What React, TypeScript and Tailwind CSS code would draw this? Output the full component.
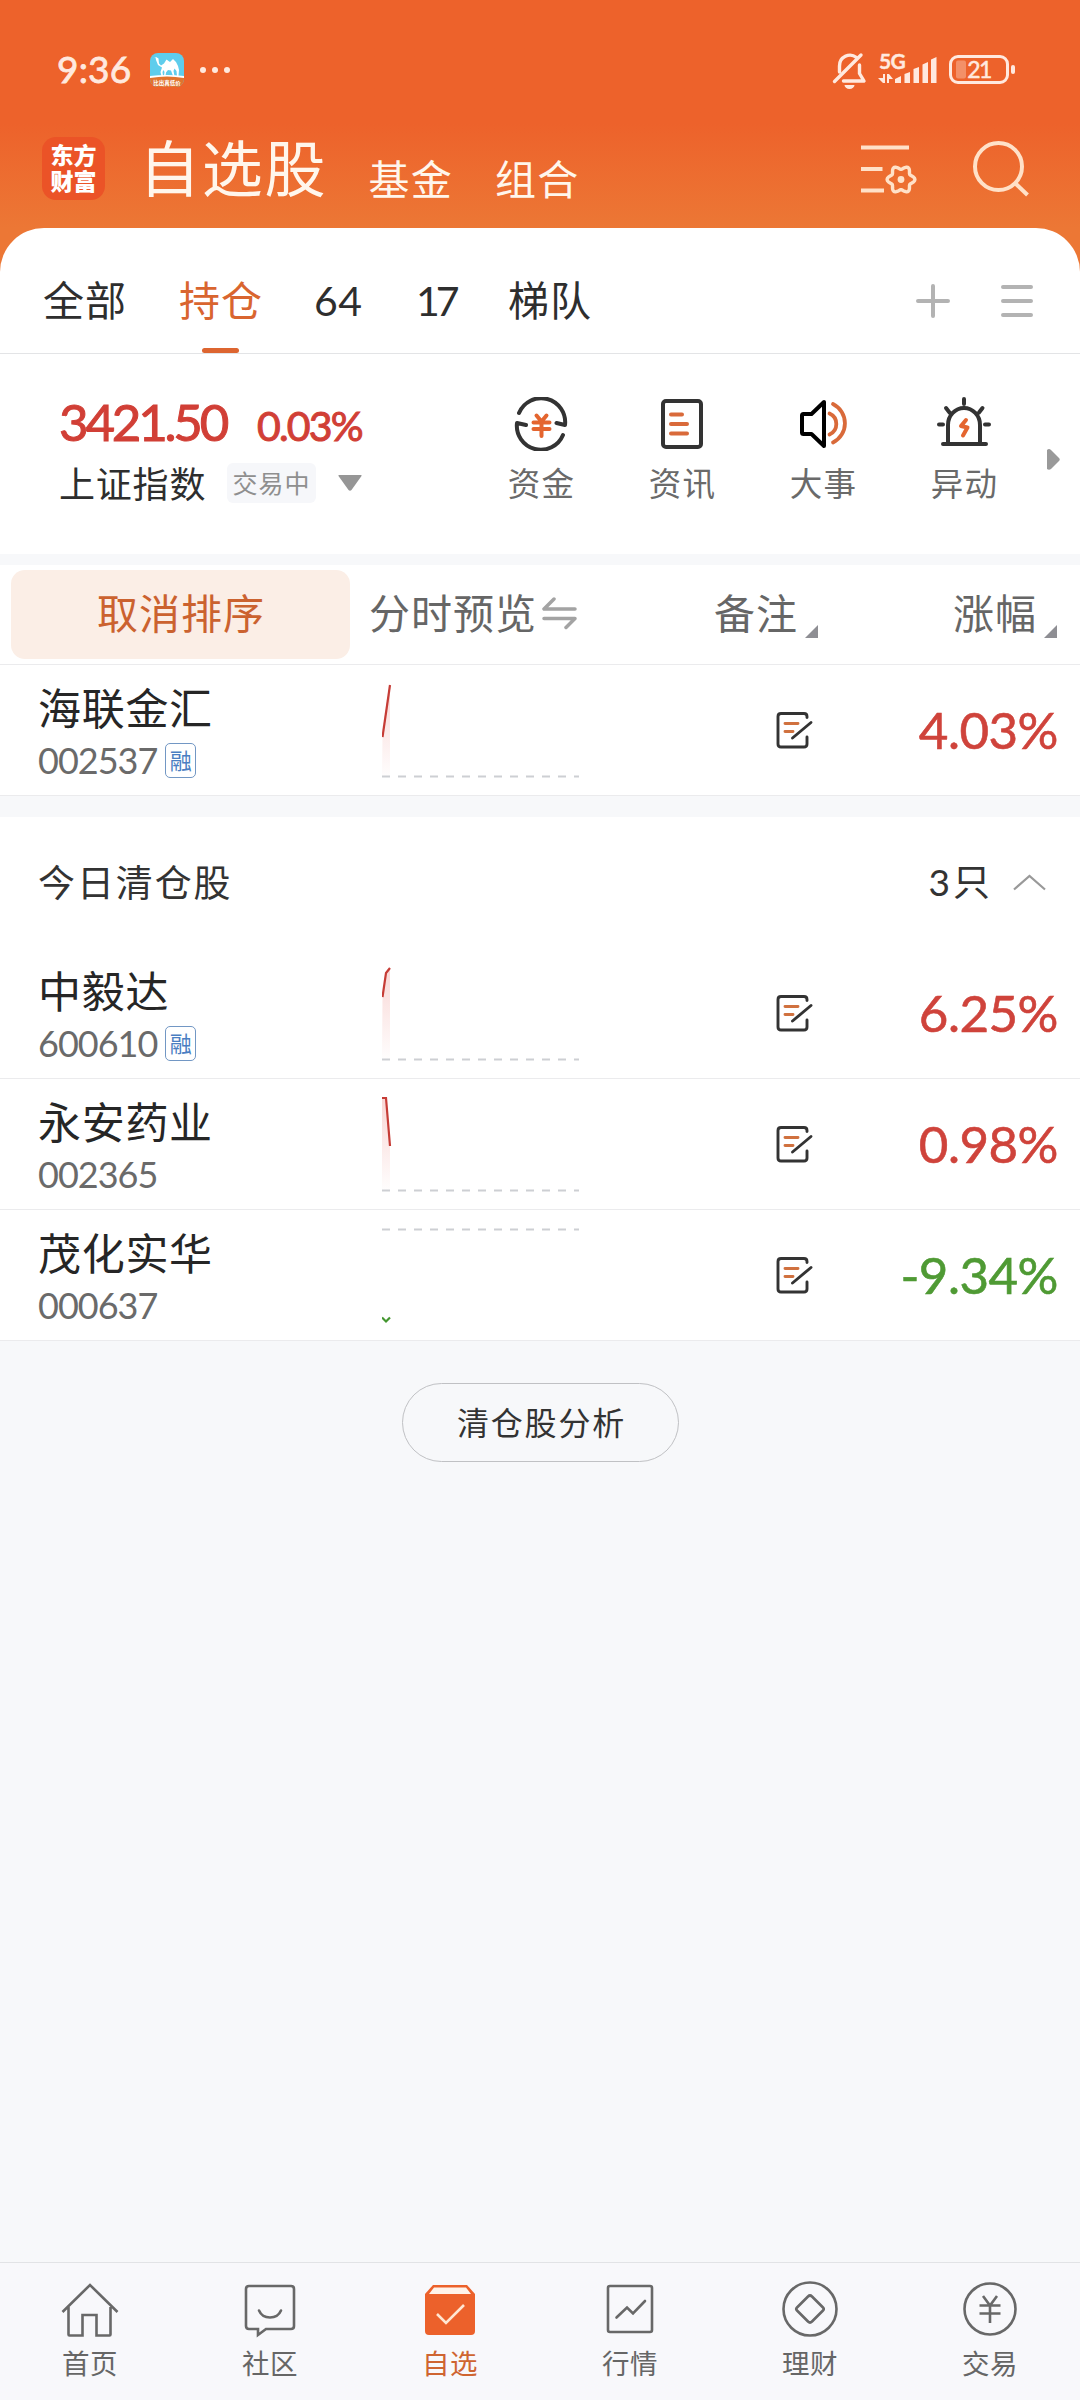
import React from "react";
import clsx from "clsx";

const NUM = "font-['Lato','Noto_Sans_CJK_SC',sans-serif]";

type Stock = {
  name: string;
  code: string;
  margin?: boolean;
  change: string;
  down?: boolean;
  line: [number, number][];
  baseY: number;
};

const HOLDING: Stock = {
  name: "海联金汇",
  code: "002537",
  margin: true,
  change: "4.03%",
  line: [[0.5, 72], [8, 20]],
  baseY: 111.5,
};

const CLEARED: Stock[] = [
  { name: "中毅达", code: "600610", margin: true, change: "6.25%", line: [[0.5, 49], [4, 25], [8, 20]], baseY: 111.5 },
  { name: "永安药业", code: "002365", change: "0.98%", line: [[0, 19], [4, 19], [8, 67]], baseY: 111.5 },
  { name: "茂化实华", code: "000637", change: "-9.34%", down: true, line: [[0, 107.5], [4, 111.5], [8, 107.5]], baseY: 19.5 },
];

// six-lobed gear outline around (cx, cy)
function gearPath(cx: number, cy: number, r: number, depth: number) {
  const pts: string[] = [];
  for (let a = 0; a < 360; a += 6) {
    const t = (a * Math.PI) / 180;
    const rr = r + depth * Math.cos(6 * t);
    pts.push(`${(cx + rr * Math.cos(t)).toFixed(2)} ${(cy + rr * Math.sin(t)).toFixed(2)}`);
  }
  return `M${pts.join("L")}Z`;
}

function StatusBar() {
  return (
    <div className="flex h-[124px] items-start pl-[57px] pr-[63px] pt-[50px] text-[#ffe9df]">
      <div className={`${NUM} -mt-px w-[93px] text-[37px] leading-[40px] tracking-[0.200px] [-webkit-text-stroke:0.8px]`}>9:36</div>
      <svg className="mt-[3px]" width="34" height="34" viewBox="0 0 34 34">
        <defs>
          <clipPath id="camel">
            <rect width="34" height="34" rx="8" />
          </clipPath>
        </defs>
        <g clipPath="url(#camel)">
          <rect width="34" height="34" fill="#5fcdec" />
          <path d="M0 23q17-2 34 0v3H0z" fill="#fff" />
          <path d="M0 25q17-3 34 0v9H0z" fill="#e0742f" />
          <path
            d="M3 5.500l3-1.500 2.500 1.500.5 5 2 2 3-2 2.500-4 2 1.500 1.500 1 3-3 3 3 2 4 1 4-.5 6h-1.500l-.5-5-2-2.500-1 2.500 1 5h-1.500l-2-5.500-3-.5-2 2.500-.5 3.500h-1.500l.5-4-1-2-1 2 .5 4h-1.500l-1-4 1.500-4.500-4-2.500-2-5-.5-2.500z"
            fill="#fff"
          />
        </g>
        <text x="17" y="31.5" textAnchor="middle" fontSize="5.5" fontWeight="700" fill="#fff" fontFamily="Noto Sans CJK SC, sans-serif">比出真低价</text>
      </svg>
      <div className="ml-4 mt-[17px] flex gap-1.5">
        <i className="size-1.5 rounded-full bg-current" />
        <i className="size-1.5 rounded-full bg-current" />
        <i className="size-1.5 rounded-full bg-current" />
      </div>
      <svg className="ml-auto" width="36" height="40" viewBox="0 0 36 40" fill="none" stroke="currentColor" strokeWidth="3.4" strokeLinecap="round" strokeLinejoin="round">
        <path d="M7.500 22V16a10.500 10.500 0 0 1 17-8.500" />
        <path d="M27.500 15v8.500l4.500 7.500H11.500" />
        <path d="M29 5L2.500 31.500" />
        <path d="M12.500 35h10a5 4 0 0 1-10 0z" fill="currentColor" stroke="none" />
      </svg>
      <svg className="ml-[10px] overflow-visible" width="62" height="40" viewBox="0 0 62 40" fill="currentColor">
        <text x="1" y="18.500" fontSize="21" fontWeight="700" letterSpacing="-0.6" stroke="currentColor" strokeWidth="0.4" fontFamily="Lato, sans-serif">5G</text>
        <path d="M5 24h2v9H5l-5-5h5zM9 33v-9h2l4 5h-4v4z" />
        <path d="M17 33v-4l6-3v7zM26.500 33V24l5.500-2v11zM35.500 33V19l5.500-2v16zM44.500 33V14.500l5.500-2.500v21zM53 33V9.500l5.500-2.500v26z" />
      </svg>
      <svg className="ml-[9px]" width="68" height="40" viewBox="0 0 68 40">
        <rect x="1.500" y="6.500" width="57" height="26" rx="7.500" fill="none" stroke="currentColor" strokeWidth="3" />
        <rect x="7" y="10.500" width="10" height="18" rx="2" fill="#f39068" />
        <rect x="62" y="15" width="4" height="9" rx="2" fill="currentColor" />
        <text x="30" y="28" textAnchor="middle" fontSize="23" letterSpacing="-1.5" fill="currentColor" stroke="currentColor" strokeWidth="0.5" fontFamily="Lato, sans-serif">21</text>
      </svg>
    </div>
  );
}

function TitleBar() {
  return (
    <div className="flex h-[104px] items-start pl-[42px] pr-[50px] text-[#fff6ec]">
      <div className="mt-[13px] size-[63px] rounded-[14px] bg-[#eb5327] pt-[4px] text-center text-[23px] font-black leading-[26px] text-white">
        东方
        <br />
        财富
      </div>
      <div className="ml-[34px] mt-[10px] text-[61px] leading-[64px] tracking-[1.800px]">自选股</div>
      <div className="ml-[41px] mt-[31px] text-[41px] leading-[44px] tracking-[1.300px]">基金</div>
      <div className="ml-[42px] mt-[31px] text-[41px] leading-[44px] tracking-[1.300px]">组合</div>
      <svg className="ml-auto mt-[18px]" width="58" height="56" viewBox="0 0 58 56" fill="none" stroke="#ffe1c8" strokeWidth="4">
        <path d="M2 5.500h48M2 27h21.500M2 48.500h23" />
        <path d={gearPath(42, 37.5, 12, 1.9)} strokeWidth="3.400" strokeLinejoin="round" />
        <circle cx="42" cy="37.500" r="3.400" fill="#ffe1c8" stroke="none" />
      </svg>
      <svg className="ml-[55px] mt-[15px]" width="58" height="60" viewBox="0 0 58 60" fill="none" stroke="#ffe1c8" strokeWidth="4">
        <circle cx="26.500" cy="27.500" r="23.500" />
        <path d="M43.500 44.500L55.500 56" />
      </svg>
    </div>
  );
}

function GroupTabs() {
  return (
    <div className="flex h-[126px] border-b border-[#e3e4e6] pl-[43px] pr-[46px] text-[41px] leading-[44px] tracking-[1px] text-[#2e2e2e]">
      <div className="mt-[48px] w-[136px]">全部</div>
      <div className="flex w-[135px] flex-col pt-[48px] text-[#d9652f]">
        持仓
        <i className="ml-[23px] mt-[28px] h-[5px] w-[37px] rounded-full bg-[#dd6530]" />
      </div>
      <div className={`${NUM} mt-[51px] w-[102px] tracking-[0.500px]`}>64</div>
      <div className={`${NUM} mt-[51px] w-[92px] tracking-[-4px]`}>17</div>
      <div className="mt-[48px]">梯队</div>
      <svg className="ml-auto mt-[55px]" width="36" height="36" viewBox="0 0 36 36" stroke="#b3b3b3" strokeWidth="4" strokeLinecap="round">
        <path d="M18 3v30M3 18h30" />
      </svg>
      <svg className="ml-[49px] mt-[55px]" width="34" height="36" viewBox="0 0 34 36" stroke="#b3b3b3" strokeWidth="4" strokeLinecap="round">
        <path d="M3 4h28M3 18h28M3 32h28" />
      </svg>
    </div>
  );
}

const SHORTCUTS: { label: string; icon: React.ReactNode }[] = [
  {
    label: "资金",
    icon: (
      <>
        <path d="M6 16A24 24 0 0 1 52 28l-8.500-2" />
        <path d="M50 38A24 24 0 0 1 4 26l9 2" />
        <g stroke="#e4652f" strokeWidth="4">
          <path d="M23.500 18.500l5 6 5-6M20.500 25.500h16M20.500 32h16M28.500 25v14" />
        </g>
      </>
    ),
  },
  {
    label: "资讯",
    icon: (
      <>
        <rect x="9" y="4" width="38" height="46" rx="3" />
        <path d="M17 17.500h11M17 27h16M17 36.500h16" stroke="#d96a3a" />
      </>
    ),
  },
  {
    label: "大事",
    icon: (
      <>
        <path d="M29 5v44L16.500 37H8.500q-1.500 0-1.500-1.500v-17q0-1.500 1.500-1.500h8z" stroke="#000" />
        <path d="M34.500 16.500a11.500 11.500 0 0 1 0 21M38 7a21.500 21.500 0 0 1 0 38.500" stroke="#d96a3a" strokeWidth="3.800" />
      </>
    ),
  },
  {
    label: "异动",
    icon: (
      <>
        <path d="M12 46.500V28a16 17 0 0 1 32 0v18.500M7 47h43M28 2v5M10 11l3.500 4.500M46.500 11L43 15.500M3 27.500h4M49 27.500h4" />
        <path d="M30 23l-5 6 6.500 1.500-4.500 8" stroke="#e4652f" />
      </>
    ),
  },
];

function IndexPanel() {
  return (
    <div className="flex h-[200px] pl-[59px] pr-[20px]">
      <div className="w-[412px] pt-[41px]">
        <div className={`${NUM} flex h-[53px] items-baseline text-[#d13f36] [-webkit-text-stroke:1px]`}>
          <span className="w-[198px] text-[51px] leading-[53px] tracking-[-3.200px]">3421.50</span>
          <span className="text-[41px] leading-[53px] tracking-[-1.800px]">0.03%</span>
        </div>
        <div className="mt-[15px] flex h-[40px] items-center">
          <span className="-mt-[3px] w-[168px] text-[36px] leading-[40px] tracking-[0.800px] text-[#2e2e2e]">上证指数</span>
          <span className="flex h-[40px] w-[89px] items-center justify-center rounded-md bg-[#f6f7fa] pb-px text-[25px] leading-none tracking-[1px] text-[#8f8f8f]">
            交易中
          </span>
          <svg className="ml-[22px]" width="24" height="16" viewBox="0 0 24 16" fill="#969696">
            <path d="M1 0h22q1 0 .5 1L13.500 15q-1.500 1.500-3 0L.5 1Q0 0 1 0z" />
          </svg>
        </div>
      </div>
      {SHORTCUTS.map((s) => (
        <div key={s.label} className="flex w-[141px] flex-col items-center pt-[43px]">
          <svg width="57" height="54" viewBox="0 0 57 54" fill="none" stroke="#333" strokeWidth="4" strokeLinecap="round" strokeLinejoin="round">
            {s.icon}
          </svg>
          <span className="mt-[11px] text-[32.500px] leading-[40px] tracking-[1.200px] text-[#6a6a6a]">{s.label}</span>
        </div>
      ))}
      <svg className="ml-auto mt-[95px]" width="13" height="21" viewBox="0 0 13 21" fill="#999">
        <path d="M0 1q2-2 4 0l8 8q1.500 1.500 0 3l-8 8q-2 1.500-4 0z" />
      </svg>
    </div>
  );
}

function SortMark() {
  return (
    <svg className="mt-[60px]" width="13" height="13" viewBox="0 0 13 13" fill="#8e8e93">
      <path d="M13 0v13H0z" />
    </svg>
  );
}

function ColumnHeader() {
  return (
    <div className="flex h-[100px] border-b border-[#ebebed] bg-white pl-[11px] pr-[23px] text-[41px] leading-[44px] tracking-[1px] text-[#666]">
      <div className="mt-[5px] h-[89px] w-[339px] rounded-[14px] bg-[#fbeee6] pl-px pt-[19px] text-center text-[#cb622f]">取消排序</div>
      <div className="ml-[19px] mt-[24px] w-[173px]">分时预览</div>
      <svg className="mt-[31px]" width="36" height="34" viewBox="0 0 36 34" fill="none" stroke="#a3a3a3" strokeWidth="3.500" strokeLinecap="round" strokeLinejoin="round">
        <path d="M12 3L2 13h31M2 22.500h31L24 31.500" />
      </svg>
      <div className="ml-[136px] mt-[24px] w-[91px]">备注</div>
      <SortMark />
      <div className="ml-auto mt-[24px] w-[91px]">涨幅</div>
      <SortMark />
    </div>
  );
}

function Sparkline({ stock }: { stock: Stock }) {
  const points = stock.line.map((p) => p.join(",")).join(" ");
  const id = `fade-${stock.code}`;
  return (
    <svg className="shrink-0" width="198" height="130" viewBox="0 0 198 130" fill="none">
      {!stock.down && (
        <>
          <defs>
            <linearGradient id={id} gradientUnits="userSpaceOnUse" x1="0" y1="18" x2="0" y2="111">
              <stop offset="0" stopColor="#e2463d" stopOpacity="0.22" />
              <stop offset="1" stopColor="#e2463d" stopOpacity="0.01" />
            </linearGradient>
          </defs>
          <polygon points={`0,111 ${points} 8,111`} fill={`url(#${id})`} />
        </>
      )}
      <path d={`M0 ${stock.baseY}h197`} stroke="#cdcfd3" strokeWidth="2" strokeDasharray="8 8" />
      <polyline points={points} stroke={stock.down ? "#43962f" : "#c63c36"} strokeWidth="2.200" />
    </svg>
  );
}

function MemoIcon() {
  return (
    <svg className="mt-[46px] shrink-0" width="38" height="38" viewBox="0 0 38 38" fill="none" stroke="#333" strokeWidth="2.900" strokeLinecap="round">
      <path d="M31 6.500V5.500q0-3-3-3H5q-3 0-3 3V33q0 3 3 3h23q3 0 3-3v-7" />
      <path d="M35 11.500L16.500 27" />
      <path d="M9 12.500h13M9 20.500h8" stroke="#d0713f" />
    </svg>
  );
}

function StockRow({ stock }: { stock: Stock }) {
  return (
    <div className="flex h-[131px] border-b border-[#ebebed] bg-white pl-[38px] pr-[22px]">
      <div className="w-[344px] pt-[18px]">
        <div className="text-[43px] leading-[46px] tracking-[0.700px] text-[#262626]">{stock.name}</div>
        <div className="mt-[11px] flex h-[40px] items-center">
          <span className={`${NUM} text-[36px] leading-[40px] tracking-[-1px] text-[#6a6a6a]`}>{stock.code}</span>
          {stock.margin && (
            <span className="ml-[8px] flex h-[35px] w-[31px] items-center justify-center rounded-[5px] border-[1.500px] border-[#7297c4] pb-0.5 text-[22px] leading-none text-[#4a7ec2]">
              融
            </span>
          )}
        </div>
      </div>
      <Sparkline stock={stock} />
      <div className="w-[196px]" />
      <MemoIcon />
      <div
        className={clsx(
          NUM,
          "ml-auto pt-[35px] text-right text-[51px] leading-[60px] tracking-[-0.500px] [-webkit-text-stroke:0.6px]",
          stock.down ? "text-[#4f9a34]" : "text-[#cf433b]"
        )}
      >
        {stock.change}
      </div>
    </div>
  );
}

const NAV: { label: string; active?: boolean; icon: React.ReactNode }[] = [
  {
    label: "首页",
    icon: <path d="M1.500 30L29 3l27.500 27M7.500 25v27.500q0 1 1 1h13V33h14v20.500h13q1 0 1-1V25" />,
  },
  {
    label: "社区",
    icon: (
      <>
        <path d="M8 4h42q3 0 3 3v37q0 3-3 3H25l-8 6v-6H8q-3 0-3-3V7q0-3 3-3z" />
        <path d="M18 28.500q3 7 11 7t11-7" strokeLinecap="round" />
      </>
    ),
  },
  {
    label: "自选",
    active: true,
    icon: (
      <>
        <path d="M12 3h34l8 9v37q0 4-4 4H8q-4 0-4-4V12z" fill="#ec612b" stroke="none" />
        <path d="M13 5.500h32l5 6.500H8z" fill="#fff3ea" stroke="none" />
        <path d="M16 32l9 9 18-18" stroke="#ffe6d2" strokeWidth="2.600" />
      </>
    ),
  },
  {
    label: "行情",
    icon: (
      <>
        <rect x="7" y="4" width="44" height="46" rx="2" />
        <path d="M15.500 35.500L26 25.500l6 6L44 19" strokeLinecap="round" />
      </>
    ),
  },
  {
    label: "理财",
    icon: (
      <>
        <circle cx="29" cy="27" r="26.500" />
        <path d="M31 14.500l11 11q1.500 1.500 0 3l-11 11q-2 2-4 0l-11-11q-1.500-1.500 0-3l11-11q2-2 4 0z" />
      </>
    ),
  },
  {
    label: "交易",
    icon: (
      <>
        <circle cx="29" cy="27" r="25.500" />
        <path d="M22 14l7 9.500 7-9.500M18.500 23.500h21M18.500 31.500h21M29 23v18" />
      </>
    ),
  },
];

function BottomNav() {
  return (
    <nav className="flex h-[138px] border-t border-[#e2e3e6] bg-[#f8f8fb]">
      {NAV.map((item) => (
        <div key={item.label} className={clsx("flex w-[180px] flex-col items-center pt-[19px]", item.active ? "text-[#cf6531]" : "text-[#666]")}>
          <svg className="overflow-visible" width="58" height="56" viewBox="0 0 58 56" fill="none" stroke="#686868" strokeWidth="2.600">
            {item.icon}
          </svg>
          <span className="mt-[8px] text-[27.500px] leading-[32px] tracking-[0.500px]">{item.label}</span>
        </div>
      ))}
    </nav>
  );
}

export default function App() {
  return (
    <div className="flex h-[2400px] w-[1080px] flex-col overflow-hidden bg-[#f7f8fa] font-['Noto_Sans_CJK_SC',sans-serif]">
      <header className="h-[278px] shrink-0 bg-linear-to-b from-[#ed622b] from-[124px] to-[#ec7735] to-[228px]">
        <StatusBar />
        <TitleBar />
      </header>
      <section className="-mt-[50px] h-[326px] shrink-0 rounded-t-[44px] bg-white">
        <GroupTabs />
        <IndexPanel />
      </section>
      <main className="grow">
        <div className="mt-[11px]">
          <ColumnHeader />
          <StockRow stock={HOLDING} />
        </div>
        <div className="mt-[21px] bg-white">
          <div className="flex h-[131px] items-center pl-[38px] pr-[34px] text-[37px] text-[#333]">
            <span className="-mt-[2px] tracking-[1.900px]">今日清仓股</span>
            <span className={`${NUM} -mt-[2px] ml-auto tracking-[3px]`}>3只</span>
            <svg className="ml-[20px]" width="33" height="17" viewBox="0 0 33 17" fill="none" stroke="#999" strokeWidth="2.200">
              <path d="M1 15.500L16.500 2 32 15.500" />
            </svg>
          </div>
          {CLEARED.map((stock) => (
            <StockRow key={stock.code} stock={stock} />
          ))}
        </div>
        <button className="mx-auto mt-[42px] block h-[79px] w-[277px] rounded-full border border-[#c0c1c4] pb-1 pl-[3px] text-center text-[32px] leading-none tracking-[1.800px] text-[#333]">
          清仓股分析
        </button>
      </main>
      <BottomNav />
    </div>
  );
}
